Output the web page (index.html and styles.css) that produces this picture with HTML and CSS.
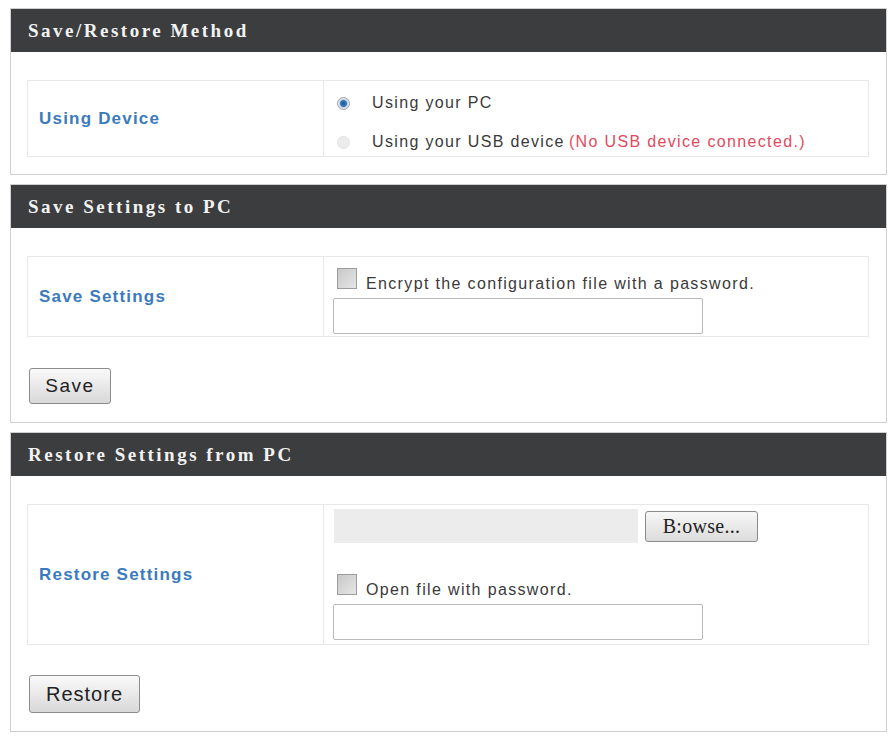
FILE: index.html
```html
<!DOCTYPE html>
<html lang="en">
<head>
  <meta charset="UTF-8">
  <title>Save/Restore Settings</title>
  <link rel="stylesheet" href="styles.css">
</head>
<body>
  <div id="page">

    <div class="panel">
      <div class="panel-head">Save/Restore Method</div>
      <div class="panel-body method-body">
        <div class="form-row device-row">
          <div class="form-label">Using Device</div>
          <div class="form-field">
            <label class="opt"><span class="radio checked"></span>Using your PC</label>
            <label class="opt"><span class="radio disabled"></span>Using your USB device <span class="warn">(No USB device connected.)</span></label>
          </div>
        </div>
      </div>
    </div>

    <div class="panel">
      <div class="panel-head">Save Settings to PC</div>
      <div class="panel-body">
        <div class="form-row save-row">
          <div class="form-label">Save Settings</div>
          <div class="form-field">
            <label class="check-line"><span class="checkbox"></span>Encrypt the configuration file with a password.</label>
            <input type="password" class="text-box">
          </div>
        </div>
        <button class="btn btn-save">Save</button>
      </div>
    </div>

    <div class="panel">
      <div class="panel-head">Restore Settings from PC</div>
      <div class="panel-body">
        <div class="form-row restore-row">
          <div class="form-label">Restore Settings</div>
          <div class="form-field">
            <div class="file-line">
              <div class="file-name"></div>
              <button class="browse">B:owse...</button>
            </div>
            <label class="check-line"><span class="checkbox"></span>Open file with password.</label>
            <input type="password" class="text-box">
          </div>
        </div>
        <button class="btn btn-restore">Restore</button>
      </div>
    </div>

  </div>
</body>
</html>
```

FILE: styles.css
```css
body {
  margin: 0;
  background: #ffffff;
  font-family: 'Liberation Sans', Arial, sans-serif;
  color: #3a3a3a;
}

#page {
  padding: 8px 3px 0 10px;
}

.panel {
  border: 1px solid #cfcfcf;
  margin-bottom: 9px;
  background: #ffffff;
}

.panel-head {
  background: #3b3d3e;
  color: #f2f2f2;
  height: 43px;
  line-height: 44px;
  padding-left: 17px;
  font-family: 'Liberation Serif', 'Times New Roman', serif;
  font-weight: bold;
  font-size: 19px;
  letter-spacing: 2.5px;
}

.panel-body {
  padding: 28px 17px 18px 16px;
}

.method-body {
  padding-bottom: 17px;
}

.form-row {
  display: flex;
  border: 1px solid #e8e8e8;
}

.form-label {
  width: 284px;
  padding-left: 11px;
  border-right: 1px solid #e8e8e8;
  display: flex;
  align-items: center;
  color: #3b7bbd;
  font-weight: bold;
  font-size: 17px;
  letter-spacing: 1.2px;
}

.form-field {
  flex: 1;
  padding: 4px 0 0 9px;
  font-size: 16px;
  letter-spacing: 1.35px;
}

.opt {
  display: flex;
  align-items: center;
  height: 36px;
  box-sizing: border-box;
}

.opt + .opt {
  height: 35px;
  align-items: flex-end;
  padding-bottom: 5px;
}

.opt + .opt .radio {
  margin-bottom: 2px;
}

.radio {
  width: 13px;
  height: 13px;
  border-radius: 50%;
  margin: 0 22px 0 4px;
  box-sizing: border-box;
}

.radio.checked {
  border: 1px solid #9aa3ad;
  background: radial-gradient(circle, #1f5e9e 0, #3376b8 3px, #c9d2dc 4px, #eef1f4 6px);
}

.radio.disabled {
  border: 1px solid #e2e2e2;
  background: #ececec;
}

.warn {
  color: #e24a5e;
  margin-left: 4px;
}

.check-line {
  display: flex;
  align-items: flex-end;
  height: 30px;
}

.checkbox {
  width: 20px;
  height: 21px;
  box-sizing: border-box;
  border: 1px solid #9c9c9c;
  background: linear-gradient(135deg, #c8c8c8, #e6e6e6);
  margin: 0 9px 4px 4px;
}

.text-box {
  display: block;
  width: 370px;
  height: 36px;
  box-sizing: border-box;
  border: 1px solid #b9b9b9;
  border-radius: 2px;
  background: #ffffff;
  margin: 5px 0 0 0;
}

.save-row .form-field {
  padding-top: 6px;
  padding-bottom: 2px;
}

.restore-row .form-field {
  padding-top: 4px;
  padding-bottom: 4px;
}

.restore-row .check-line {
  height: 28px;
}

.file-line {
  display: flex;
  align-items: center;
  gap: 7px;
  margin-bottom: 28px;
}

.file-name {
  width: 304px;
  height: 34px;
  background: #ececec;
  margin-left: 1px;
}

.browse {
  width: 113px;
  height: 31px;
  border: 1px solid #8a8a8a;
  border-radius: 3px;
  background: linear-gradient(#f7f7f7, #dcdcdc);
  font-family: 'Liberation Serif', 'Times New Roman', serif;
  font-size: 20px;
  letter-spacing: 0.3px;
  color: #222;
  padding: 0;
}

.btn {
  display: block;
  border: 1px solid #8c8c8c;
  border-radius: 3px;
  background: linear-gradient(#fafafa, #d8d8d8);
  color: #222;
  font-family: 'Liberation Sans', Arial, sans-serif;
  padding: 0;
  margin-left: 2px;
}

.btn-save {
  width: 82px;
  height: 36px;
  margin-top: 31px;
  font-size: 19px;
  letter-spacing: 1.5px;
}

.btn-restore {
  width: 111px;
  height: 38px;
  margin-top: 30px;
  font-size: 20px;
  letter-spacing: 1px;
}
```
